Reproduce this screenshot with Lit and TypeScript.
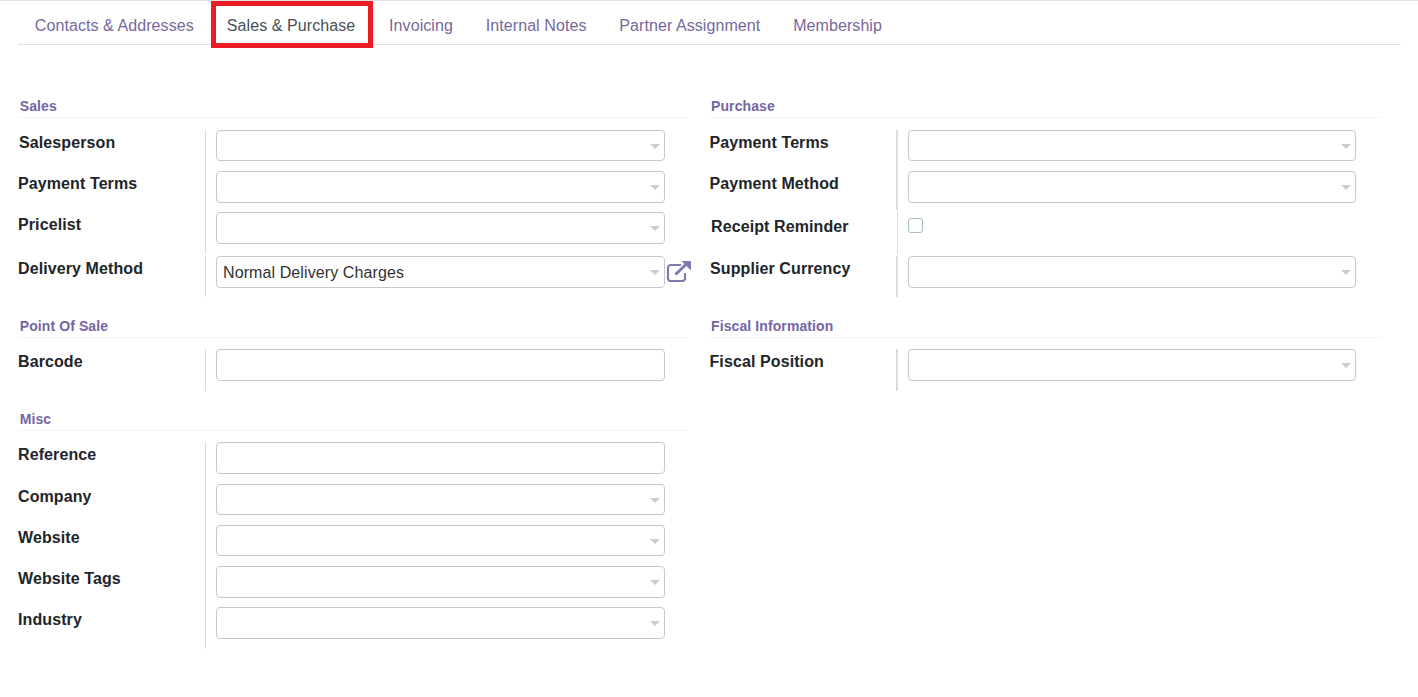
import { LitElement, html, css, nothing } from "lit";
import { customElement } from "lit/decorators.js";

type Row = { label: string; h: number; kind?: "select" | "text" | "check"; value?: string; link?: boolean; nudge?: string; short?: boolean; gapped?: boolean };
type Section = { title: string; gap: string; rows: Row[] };

const left: Section[] = [
  { title: "Sales", gap: "", rows: [
    { label: "Salesperson", h: 41, nudge: "n1", short: true },
    { label: "Payment Terms", h: 41 },
    { label: "Pricelist", h: 44, gapped: true },
    { label: "Delivery Method", h: 41, value: "Normal Delivery Charges", link: true },
  ] },
  { title: "Point Of Sale", gap: "g21 tight", rows: [{ label: "Barcode", h: 42, kind: "text" }] },
  { title: "Misc", gap: "g20 tight", rows: [
    { label: "Reference", h: 42, kind: "text" },
    { label: "Company", h: 41, short: true },
    { label: "Website", h: 41, short: true },
    { label: "Website Tags", h: 41 },
    { label: "Industry", h: 42 },
  ] },
];
const right: Section[] = [
  { title: "Purchase", gap: "", rows: [
    { label: "Payment Terms", h: 41, short: true },
    { label: "Payment Method", h: 41, gapped: true },
    { label: "Receipt Reminder", h: 44, kind: "check", nudge: "n1", gapped: true },
    { label: "Supplier Currency", h: 41, nudge: "n05" },
  ] },
  { title: "Fiscal Information", gap: "g21 tight", rows: [{ label: "Fiscal Position", h: 42 }] },
];
const tabs = ["Contacts & Addresses", "Sales & Purchase", "Invoicing", "Internal Notes", "Partner Assignment", "Membership"];

@customElement("app-root")
export class AppRoot extends LitElement {
  static styles = css`
    :host { display: block; width: 1418px; height: 697px; overflow: hidden; background: #fff; font-family: "Liberation Sans", Arial, sans-serif; border-top: 1px solid #dee2e6; box-sizing: border-box; color: #212529; }
    nav { display: flex; height: 43px; margin: 0 17px 0 18px; border-bottom: 1px solid #dee2e6; }
    .tab { position: relative; padding: 0 16px 0 16.8px; line-height: 50px; height: 43px; font-size: 16px; letter-spacing: 0.08px; color: #77689c; white-space: nowrap; }
    .tab.active { color: #495057; padding: 0 17px 0 16px; margin-left: 1px; }
    .tab.active::after { content: ""; position: absolute; left: 0; right: -1px; top: 0; height: 37px; border: 5px solid #ed1c24; }
    .cols { display: grid; grid-template-columns: 669px 670px; column-gap: 23px; padding: 53px 0 0 19px; }
    .title { height: 19px; line-height: 17px; font-size: 14px; font-weight: 700; color: #7566a3; letter-spacing: 0.1px; border-bottom: 1px solid #f1f1f1; margin-bottom: 12px; }
    .left .title { text-indent: 0.7px; }
    .tight .title { margin-bottom: 11px; }
    .g21 { margin-top: 21px; }
    .g20 { margin-top: 20px; }
    .row { display: flex; }
    .label { width: 187px; box-sizing: border-box; margin-left: -1px; padding-top: 1px; font-size: 16px; font-weight: 700; line-height: 24px; color: #212529; letter-spacing: 0.1px; white-space: nowrap; flex: none; }
    .label.n1 { margin-left: 0; width: 186px; }
    .label.n05 { margin-left: -0.5px; width: 186.5px; }
    .right .label { margin-left: -1.5px; width: 186.5px; }
    .right .label.n1 { margin-left: 0; width: 186px; padding-top: 3px; }
    .right .label.n05 { margin-left: -1px; width: 186px; }
    .cell { flex: 1; display: flex; align-items: flex-start; border-left: 1px solid #dcdcdc; padding-left: 10px; }
    .row.gapped .cell { margin-bottom: 2px; }
    .right .cell { border-left: 2px solid #dcdcdc; padding-left: 10px; }
    .right .row.thin .cell { border-left-width: 1px; padding-left: 10px; }
    .field { width: 449px; height: 32px; box-sizing: border-box; border: 1px solid #c8c8c8; border-radius: 4px; font-size: 16px; letter-spacing: 0.1px; line-height: 32px; padding-left: 6px; color: #333; position: relative; white-space: nowrap; background: #fff; }
    .field.short { height: 31px; }
    .right .field { width: 448px; }
    .field.select::after { content: ""; position: absolute; right: 4px; top: 13px; border-left: 5px solid transparent; border-right: 5px solid transparent; border-top: 5px solid #cccccc; }
    .check { width: 15px; height: 15px; box-sizing: border-box; margin-top: 6px; border: 1px solid #a8bcc4; border-radius: 3px; }
    .link { width: 26px; height: 22px; margin: 4px 0 0 1px; flex: none; }
  `;

  private icon() {
    return html`<svg class="link" viewBox="0 0 26 22" fill="none" stroke="#7b7bb0">
      <path d="M15 5H4.500A2.500 2.500 0 0 0 2 7.500v11A2.500 2.500 0 0 0 4.500 21h12a2.500 2.500 0 0 0 2.500-2.500V13" stroke-width="2.200"/>
      <path d="M9.500 14.500 21.500 3" stroke-width="3"/>
      <path d="M15.500 1H25V10.500Z" fill="#7b7bb0" stroke="none"/>
    </svg>`;
  }

  private row(r: Row) {
    const kind = r.kind ?? "select";
    return html`<div class="row ${r.gapped ? "gapped" : ""} ${kind === "check" ? "thin" : ""}" style="height:${r.h}px">
      <div class="label ${r.nudge ?? ""}">${r.label}</div>
      <div class="cell">
        ${kind === "check"
          ? html`<div class="check"></div>`
          : html`<div class="field ${kind} ${r.short ? "short" : ""}">${r.value ?? ""}</div>`}
        ${r.link ? this.icon() : nothing}
      </div>
    </div>`;
  }

  private column(name: string, sections: Section[]) {
    return html`<div class=${name}>
      ${sections.map((s) => html`<section class=${s.gap}>
        <div class="title">${s.title}</div>
        ${s.rows.map((r) => this.row(r))}
      </section>`)}
    </div>`;
  }

  render() {
    return html`
      <nav>${tabs.map((t, i) => html`<div class="tab ${i === 1 ? "active" : ""}">${t}</div>`)}</nav>
      <div class="cols">${this.column("left", left)}${this.column("right", right)}</div>
    `;
  }
}
